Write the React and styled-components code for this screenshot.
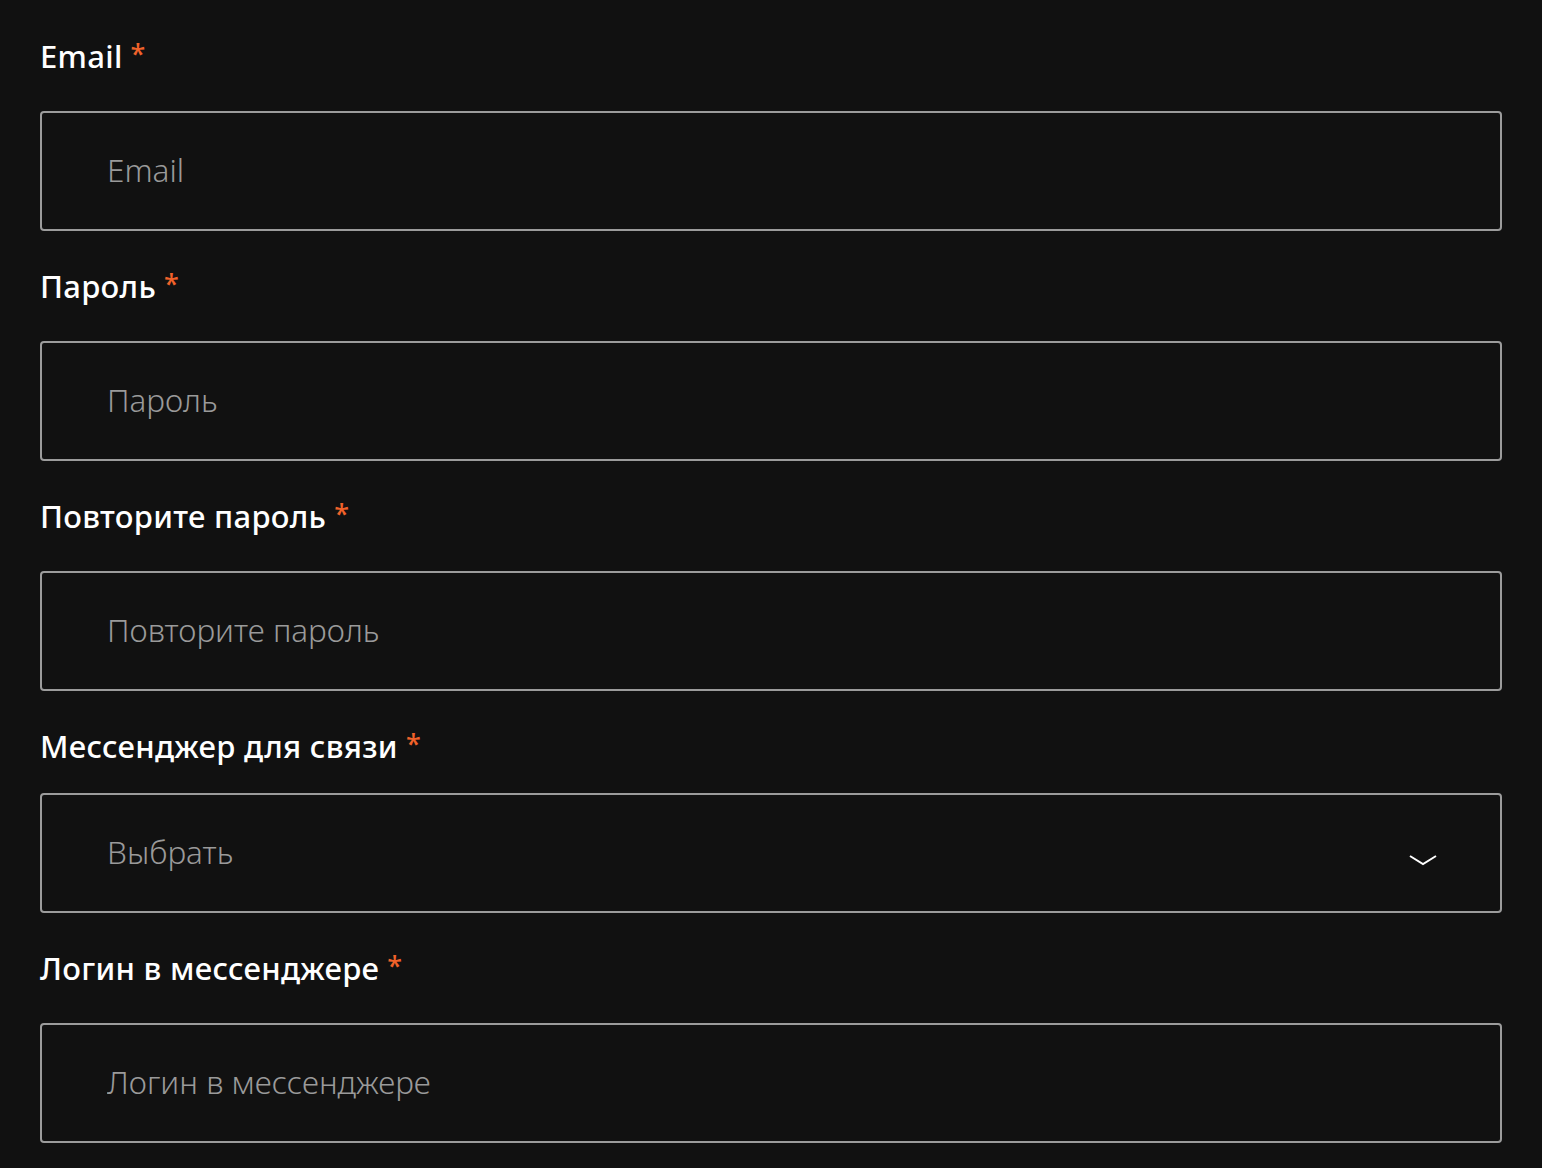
import styled, { createGlobalStyle } from "styled-components";

const GlobalStyle = createGlobalStyle`
  html, body {
    margin: 0;
    padding: 0;
    background: #111111;
  }
  body {
    font-family: "Noto Sans", "Open Sans", sans-serif;
    color: #ffffff;
  }
`;

const Form = styled.form`
  display: flex;
  flex-direction: column;
  padding: 1px 40px 0 40px;
  width: 1462px;
`;

const Field = styled.div`
  display: flex;
  flex-direction: column;
`;

const Label = styled.label`
  display: flex;
  align-items: center;
  gap: 8px;
  height: ${(p) => (p.$short ? "102px" : "110px")};
  box-sizing: border-box;
  font-size: 31px;
  font-weight: 500;
  letter-spacing: 0.3px;
  color: #ffffff;
  margin-top: ${(p) => (p.$short ? "4px" : "0")};
  margin-bottom: ${(p) => (p.$short ? "-4px" : "0")};
`;

const Star = styled.span`
  color: #f0622a;
  font-size: 27px;
  font-weight: 500;
  position: relative;
  top: -3px;
`;

const Box = styled.div`
  display: flex;
  align-items: center;
  height: 120px;
  box-sizing: border-box;
  border: 2px solid #9c9c9c;
  border-radius: 4px;
  padding: 0 63px 0 65px;
  background: #111111;
`;

const Input = styled.input`
  flex: 1;
  background: transparent;
  border: none;
  outline: none;
  font-family: inherit;
  font-size: 31.5px;
  font-weight: 300;
  color: #ffffff;
  padding: 0 0 4px 0;

  &::placeholder {
    color: #9a9a9a;
  }
`;

const SelectText = styled.span`
  flex: 1;
  font-size: 31.5px;
  font-weight: 300;
  color: #9a9a9a;
  padding-bottom: 4px;
`;

const ChevronIcon = styled.svg`
  margin-top: 13px;
`;

const Chevron = () => (
  <ChevronIcon width="28" height="12" viewBox="0 0 28 12" fill="none">
    <path d="M1 2L14 10L27 2" stroke="#ffffff" strokeWidth="2" />
  </ChevronIcon>
);

const fields = [
  { label: "Email", type: "email" },
  { label: "Пароль", type: "password" },
  { label: "Повторите пароль", type: "password" },
  { label: "Мессенджер для связи", select: true },
  { label: "Логин в мессенджере", type: "text" },
];

export default function App() {
  return (
    <>
      <GlobalStyle />
      <Form>
        {fields.map((f) => (
          <Field key={f.label}>
            <Label $short={f.select}>
              {f.label}
              <Star>*</Star>
            </Label>
            {f.select ? (
              <Box>
                <SelectText>Выбрать</SelectText>
                <Chevron />
              </Box>
            ) : (
              <Box>
                <Input type="text" placeholder={f.label} />
              </Box>
            )}
          </Field>
        ))}
      </Form>
    </>
  );
}
